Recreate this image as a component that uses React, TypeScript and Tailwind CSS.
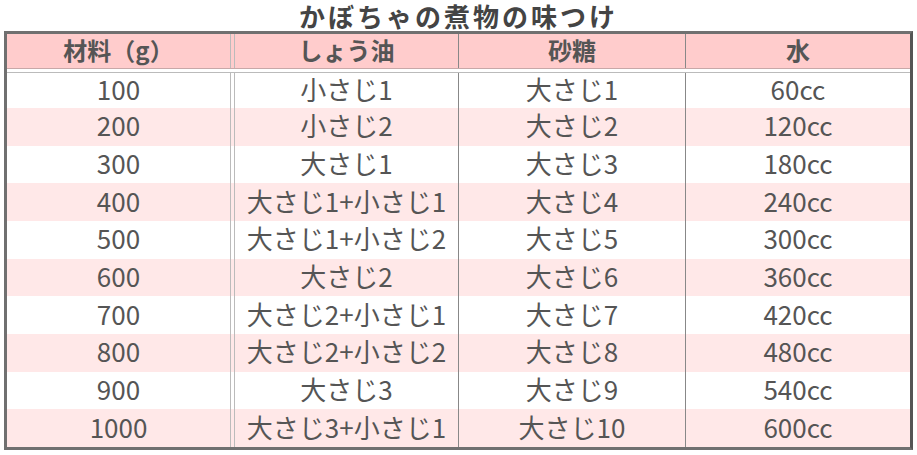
const rows = [
  ["100", "小さじ1", "大さじ1", "60cc"],
  ["200", "小さじ2", "大さじ2", "120cc"],
  ["300", "大さじ1", "大さじ3", "180cc"],
  ["400", "大さじ1+小さじ1", "大さじ4", "240cc"],
  ["500", "大さじ1+小さじ2", "大さじ5", "300cc"],
  ["600", "大さじ2", "大さじ6", "360cc"],
  ["700", "大さじ2+小さじ1", "大さじ7", "420cc"],
  ["800", "大さじ2+小さじ2", "大さじ8", "480cc"],
  ["900", "大さじ3", "大さじ9", "540cc"],
  ["1000", "大さじ3+小さじ1", "大さじ10", "600cc"],
];

const font = { fontFamily: '"Noto Sans CJK JP", "Noto Sans", sans-serif' };

function Row({ cells, className }: { cells: string[]; className: string }) {
  return (
    <div className={`flex ${className}`}>
      <div className="flex w-[224px] items-center justify-center border-r border-[#bbb] pb-[3px]">{cells[0]}</div>
      <div className="ml-[3px] flex w-[225px] items-center justify-center border-x border-l-[#bbb] border-r-[#888] pb-[3px]">{cells[1]}</div>
      <div className="flex w-[227px] items-center justify-center border-r border-[#888] pb-[3px]">{cells[2]}</div>
      <div className="flex w-[224px] items-center justify-center pb-[3px]">{cells[3]}</div>
    </div>
  );
}

export default function App() {
  return (
    <div className="h-[455px] w-[917px] bg-white text-[#555]" style={font}>
      <h1 className="h-[31px] text-center text-[26px] font-bold leading-[31px] tracking-[3px] text-[#444]">
        かぼちゃの煮物の味つけ
      </h1>
      <div className="ml-[4px] w-[909px] border-[3px] border-[#707070] border-r-[#555]">
        <Row cells={["材料（g）", "しょう油", "砂糖", "水"]} className="h-[35px] border-b border-[#c8a8a8] bg-[#ffcccc] text-[24px] font-bold" />
        <div className="h-[3px]" />
        <Row cells={rows[0]} className="h-[36px] border-t border-[#bbb] bg-white text-[26px] leading-none" />
        <div className="flex h-[339px] flex-col">
          {rows.slice(1).map((r, i) => (
            <Row key={r[0]} cells={r} className={`flex-1 text-[26px] leading-none ${i % 2 === 0 ? "bg-[#ffe8e8]" : "bg-white"}`} />
          ))}
        </div>
      </div>
    </div>
  );
}
